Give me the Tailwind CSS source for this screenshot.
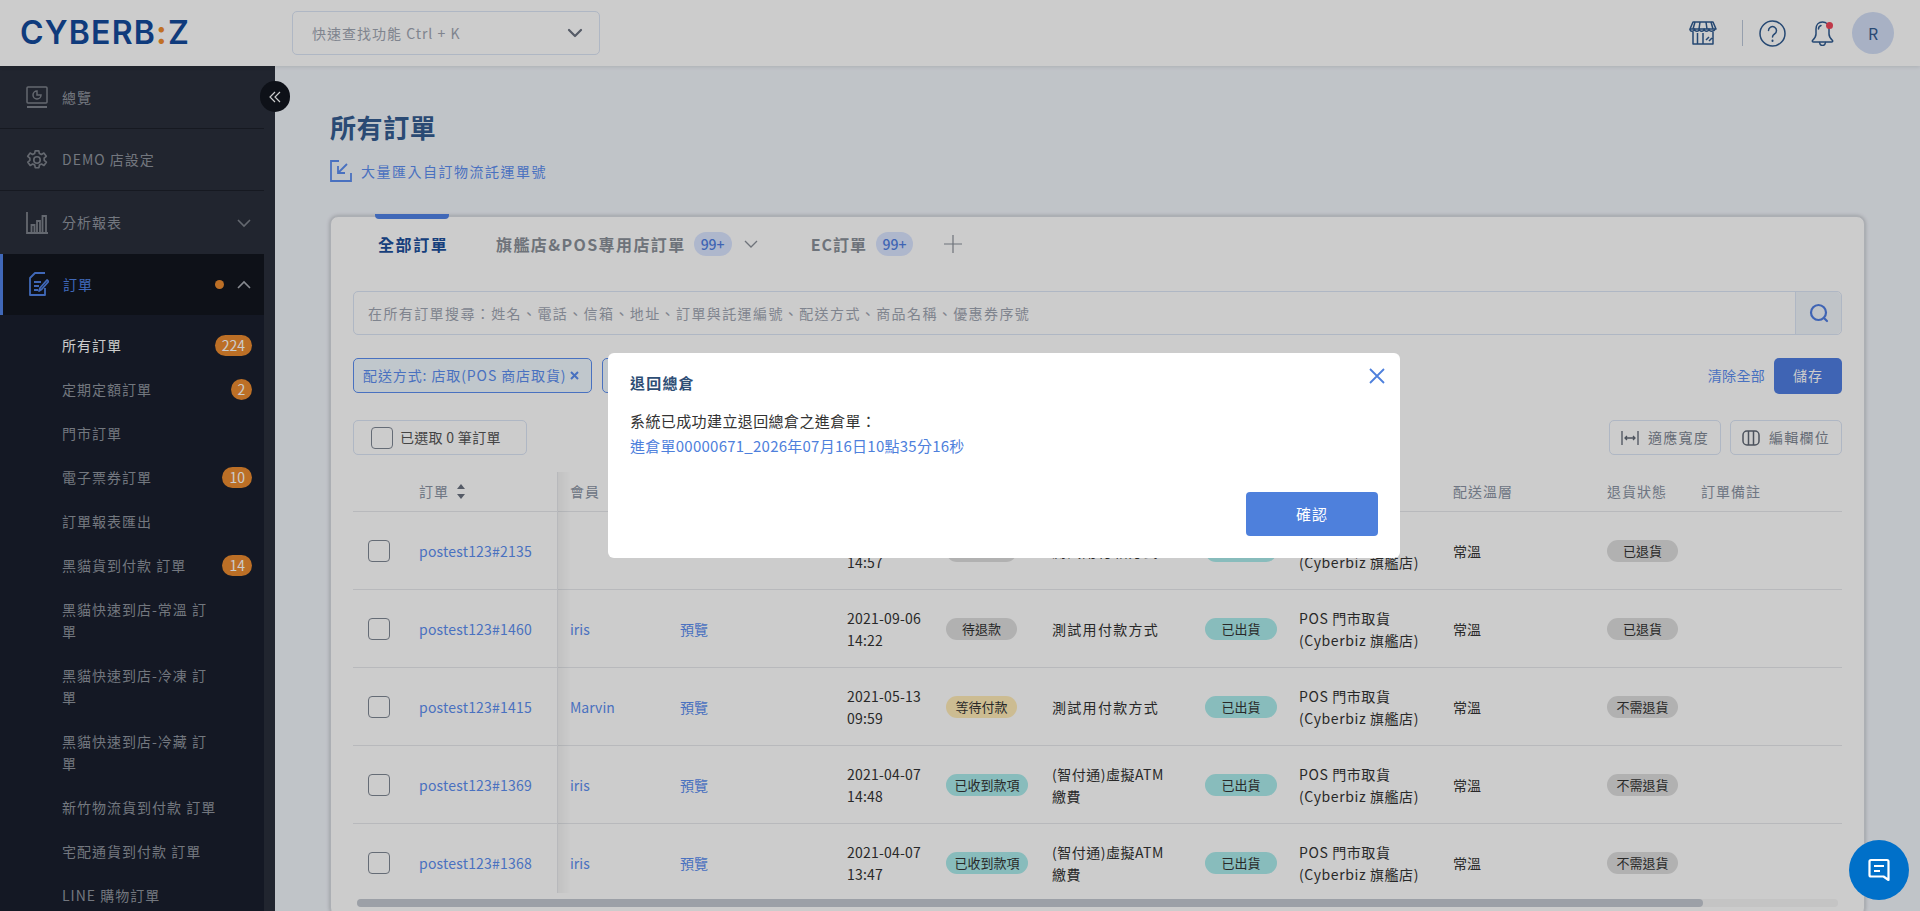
<!DOCTYPE html>
<html lang="zh-Hant">
<head>
<meta charset="utf-8">
<script src="https://cdn.jsdelivr.net/npm/@tailwindcss/browser@4"></script>
<title>所有訂單</title>
</head>
<body class="h-[911px] w-[1920px] overflow-hidden bg-[#f1f5fb] font-['Noto_Sans_CJK_TC','Noto_Sans',sans-serif] text-[14px] text-[#333]">
<header class="flex h-[66px] items-center bg-white shadow-[0_1px_4px_rgba(0,0,0,0.1)] relative z-10">
  <div class="ml-[20px] flex w-[272px] items-center font-['Inter',sans-serif] text-[32px] leading-none font-semibold tracking-[1.2px] text-[#134a9c]">CYBERB<span class="text-[#f08c2e] font-bold">:</span>Z</div>
  <div class="flex h-[44px] w-[308px] items-center justify-between rounded-[5px] border border-[#dbe5f5] pl-[19px] pr-[16px] text-[#9fa6b2] tracking-[1px]">
    <span>快速查找功能 Ctrl + K</span>
    <svg class="h-[14px] w-[16px]" viewBox="0 0 16 14" fill="none" stroke="#6b7280" stroke-width="2.2" stroke-linecap="round" stroke-linejoin="round"><path d="M2 4l6 6 6-6"/></svg>
  </div>
  <div class="ml-auto flex items-center">
    <svg class="h-[24px] w-[28px]" viewBox="0 0 28 24" fill="none" stroke="#2f5a8f" stroke-width="1.5" stroke-linejoin="round"><path d="M4 1h20l3 7H1z"/><path d="M6 1L4 8M11 1l-1 7M17 1l1 7M22 1l2 7"/><path d="M1 8c0 3 4 3 4.500 0 .5 3 4.300 3 4.800 0 .5 3 4.300 3 4.800 0 .5 3 4.300 3 4.800 0 .5 3 5.100 3 6.100 0" /><path d="M4 11v12h20V11M8.500 12v11M14 12v11M17 19l3-3M20 20l3-3"/></svg>
    <div class="ml-[25px] mr-[16px] h-[26px] w-px bg-[#bcc7d9]"></div>
    <svg class="h-[27px] w-[27px]" viewBox="0 0 27 27" fill="none" stroke="#2f5a8f" stroke-width="1.500" stroke-linecap="round"><circle cx="13.500" cy="13.500" r="12.500"/><path d="M9.500 10.500a4 4 0 1 1 6 3.500c-1.300.8-2 1.500-2 3"/><path d="M13.500 20.500v.5" stroke-width="2"/></svg>
    <div class="relative ml-[25px] h-[26px] w-[23px]">
      <svg class="h-[26px] w-[23px]" viewBox="0 0 23 26" fill="none" stroke="#2f5a8f" stroke-width="1.500" stroke-linecap="round" stroke-linejoin="round"><path d="M11.500 2c-4 0-6.500 3-6.500 7v5c0 3-2 5-3.500 6.500-.5.8 0 1.500 1 1.500h18c1 0 1.500-.7 1-1.500-1.500-1.500-3.500-3.500-3.500-6.500V9c0-4-2.500-7-6.500-7z"/><path d="M8.500 22.500c.3 2 1.500 3 3 3s2.700-1 3-3M7.500 9c0-2 1-3 2.500-3.500"/></svg>
      <span class="absolute right-[1px] top-[2px] h-[7px] w-[7px] rounded-full bg-[#f0465a]"></span>
    </div>
    <div class="ml-[18px] mr-[26px] flex h-[42px] w-[42px] items-center justify-center rounded-full bg-[#d2deF6] text-[16px] text-[#355d92]">R</div>
  </div>
</header>
<div class="flex h-[845px]">
  <aside class="relative w-[275px] shrink-0 bg-[#2a2f3b]">
    <div class="h-full w-[264px] overflow-hidden text-[#90959f] tracking-[1px]">
      <div class="flex h-[63px] items-center border-b border-[#1c202a] pl-[26px]">
        <svg class="mr-[14px] h-[22px] w-[22px]" viewBox="0 0 22 22" fill="none" stroke="#7e838c" stroke-width="1.500"><rect x="1" y="1" width="20" height="16" rx="1"/><path d="M1 21h20" stroke-width="2"/><path d="M11 5a4 4 0 1 0 4 4h-4z"/></svg>
        <span>總覽</span>
      </div>
      <div class="flex h-[62px] items-center border-b border-[#1c202a] pl-[26px]">
        <svg class="mr-[14px] h-[22px] w-[22px]" viewBox="0 0 24 24" fill="none" stroke="#7e838c" stroke-width="1.800" stroke-linejoin="round"><path d="M10 2h4l.6 3 2.200 1 2.700-1.600 2.600 3.600-2.300 2 .1 2.400 2.300 2-2.600 3.600-2.700-1.600-2.200 1-.6 3h-4l-.6-3-2.200-1-2.700 1.600-2.600-3.600 2.300-2-.1-2.400-2.300-2 2.600-3.600 2.700 1.600 2.200-1z"/><circle cx="12" cy="12" r="3.500"/></svg>
        <span>DEMO 店設定</span>
      </div>
      <div class="flex h-[63px] items-center pl-[26px] pr-[13px]">
        <svg class="mr-[14px] h-[22px] w-[22px]" viewBox="0 0 22 22" fill="none" stroke="#7e838c" stroke-width="1.800"><path d="M1 0v21h21"/><path d="M5.500 21v-8h3v8M11 21V9h3v12M16.500 21V4h3.500v17"/></svg>
        <span>分析報表</span>
        <svg class="ml-auto h-[10px] w-[14px]" viewBox="0 0 14 10" fill="none" stroke="#7e838c" stroke-width="1.600"><path d="M1 2l6 6 6-6"/></svg>
      </div>
      <div class="flex h-[61px] items-center border-l-[3px] border-[#5083e6] bg-[#12161f] pl-[26px] pr-[13px] text-[#5083e6]">
        <svg class="mr-[14px] h-[25px] w-[20px]" viewBox="0 0 20 25" fill="none" stroke="#5083e6" stroke-width="1.800" stroke-linejoin="round"><path d="M16 1H6L1 6v17h15V16"/><path d="M5 10h7M5 14h5M5 18h4"/><path d="M10 19l1-3 7-8 1.500 1.500-7 8z"/></svg>
        <span>訂單</span>
        <span class="ml-auto mr-[13px] h-[9px] w-[9px] rounded-full bg-[#ec8b30]"></span>
        <svg class="h-[10px] w-[14px]" viewBox="0 0 14 10" fill="none" stroke="#a9adb5" stroke-width="1.600"><path d="M1 8l6-6 6 6"/></svg>
      </div>
      <div class="h-[620px] bg-[#191f2d] pl-[62px] pr-[12px] pt-[8px] leading-[22px]">
        <div class="flex h-[44px] items-center justify-between text-white"><span>所有訂單</span><span class="rounded-full bg-[#ec8b30] px-[7px] tracking-normal text-[14px] leading-[21px]">224</span></div>
        <div class="flex h-[44px] items-center justify-between"><span>定期定額訂單</span><span class="flex h-[21px] w-[21px] items-center justify-center rounded-full bg-[#ec8b30] tracking-normal text-white">2</span></div>
        <div class="flex h-[44px] items-center">門市訂單</div>
        <div class="flex h-[44px] items-center justify-between"><span>電子票券訂單</span><span class="rounded-full bg-[#ec8b30] px-[7px] tracking-normal leading-[21px] text-white">10</span></div>
        <div class="flex h-[44px] items-center">訂單報表匯出</div>
        <div class="flex h-[44px] items-center justify-between"><span>黑貓貨到付款 訂單</span><span class="rounded-full bg-[#ec8b30] px-[7px] tracking-normal leading-[21px] text-white">14</span></div>
        <div class="w-[158px] py-[11px]">黑貓快速到店-常溫 訂單</div>
        <div class="w-[158px] py-[11px]">黑貓快速到店-冷凍 訂單</div>
        <div class="w-[158px] py-[11px]">黑貓快速到店-冷藏 訂單</div>
        <div class="flex h-[44px] items-center">新竹物流貨到付款 訂單</div>
        <div class="flex h-[44px] items-center">宅配通貨到付款 訂單</div>
        <div class="flex h-[44px] items-center">LINE 購物訂單</div>
      </div>
    </div>
    <button class="absolute left-[260px] top-[15px] flex h-[31px] w-[30px] items-center justify-center rounded-full bg-[#12161f]">
      <svg class="h-[12px] w-[12px]" viewBox="0 0 12 12" fill="none" stroke="#fff" stroke-width="1.200"><path d="M6 1L1 6l5 5M11 1L6 6l5 5"/></svg>
    </button>
  </aside>
  <main class="min-w-0 flex-1 pl-[55px] pr-[55px]">
    <h1 class="mt-[43px] text-[26px] leading-[36px] font-semibold tracking-[0.6px] text-[#355d92]">所有訂單</h1>
    <div class="mt-[15px] flex h-[22px] items-center tracking-[1.5px] text-[#5c8ef0]">
      <svg class="mr-[9px] h-[22px] w-[22px]" viewBox="0 0 22 22" fill="none" stroke="#5c8ef0" stroke-width="1.800"><path d="M9 1H1v20h20v-8"/><path d="M17 4l-9 9M8 6v7h7" /></svg>
      <span>大量匯入自訂物流託運單號</span>
    </div>
    <section class="relative mt-[34px] h-[700px] rounded-[8px] border border-[#d7dbe2] bg-white px-[22px] shadow-[0_0_4px_rgba(0,0,0,0.25)]">
      <div class="flex h-[74px] items-center pb-[26px] pt-[6px] text-[16px] font-semibold text-[#8a9099]">
        <div class="relative ml-[25px] w-[118px] text-[#1c4f9c] tracking-[1.6px]">全部訂單<span class="absolute -top-[18px] -left-[3px] h-[5px] w-[74px] rounded-b-[4px] bg-[#5083e6]"></span></div>
        <span class="tracking-[1.4px]">旗艦店&amp;POS專用店訂單</span>
        <span class="ml-[8px] flex h-[24px] w-[38px] items-center justify-center rounded-full bg-[#dae5ff] text-[14px] font-medium text-[#4f7ee2]">99+</span>
        <svg class="ml-[12px] h-[10px] w-[14px]" viewBox="0 0 14 10" fill="none" stroke="#8a9099" stroke-width="1.300"><path d="M1 2l6 6 6-6"/></svg>
        <span class="ml-[53px] tracking-[1px]">EC訂單</span>
        <span class="ml-[9px] flex h-[24px] w-[37px] items-center justify-center rounded-full bg-[#dae5ff] text-[14px] font-medium text-[#4f7ee2]">99+</span>
        <svg class="ml-[31px] h-[18px] w-[18px]" viewBox="0 0 18 18" fill="none" stroke="#8a9099" stroke-width="1.200"><path d="M9 0v18M0 9h18"/></svg>
      </div>
      <div class="flex h-[44px] rounded-[5px] border border-[#dbe5f5]">
        <div class="flex flex-1 items-center pl-[14px] tracking-[1.4px] text-[#9fa6b2]">在所有訂單搜尋：姓名、電話、信箱、地址、訂單與託運編號、配送方式、商品名稱、優惠券序號</div>
        <div class="flex w-[46px] items-center justify-center rounded-r-[5px] border-l border-[#dbe5f5] bg-[#f1f5fb]">
          <svg class="h-[20px] w-[20px]" viewBox="0 0 20 20" fill="none" stroke="#4f7ee2" stroke-width="2.200" stroke-linecap="round"><circle cx="9.500" cy="9.500" r="7.500"/><path d="M15 15l3 3"/></svg>
        </div>
      </div>
      <div class="mt-[23px] flex h-[35px] items-center">
        <div class="flex h-[35px] w-[239px] items-center rounded-[5px] border border-[#5c8ef0] bg-[#f1f9ff] pl-[9px] text-[#5c8ef0] tracking-[0.9px]">配送方式: 店取(POS 商店取貨)<svg class="ml-[4px] h-[9px] w-[9px]" viewBox="0 0 9 9" stroke="#5c8ef0" stroke-width="2"><path d="M1 1l7 7M8 1L1 8"/></svg></div>
        <div class="ml-[10px] h-[35px] w-[60px] rounded-[5px] border border-[#5c8ef0] bg-[#f1f9ff]"></div>
        <span class="ml-auto mr-[9px] tracking-[0.3px] text-[#5c8ef0]">清除全部</span>
        <span class="flex h-[36px] w-[68px] items-center justify-center rounded-[5px] bg-[#4f7ee2] text-white tracking-[1px]">儲存</span>
      </div>
      <div class="mt-[27px] flex h-[35px] items-center">
        <div class="flex h-[35px] w-[174px] items-center rounded-[5px] border border-[#dbe5f5] pl-[17px] tracking-[0.3px] text-[#555]">
          <span class="mr-[7px] h-[22px] w-[22px] rounded-[4px] border border-[#7f8794] bg-white"></span>已選取 0 筆訂單
        </div>
        <div class="ml-auto flex h-[35px] w-[112px] items-center justify-center rounded-[5px] border border-[#dbe5f5] tracking-[1.2px] text-[#808794]">
          <svg class="mr-[9px] h-[16px] w-[18px]" viewBox="0 0 18 16" fill="none" stroke="#606875" stroke-width="1.300"><path d="M1 1v14M17 1v14M4 8h10M6 6L4 8l2 2M12 6l2 2-2 2"/></svg>適應寬度
        </div>
        <div class="ml-[9px] flex h-[35px] w-[112px] items-center justify-center rounded-[5px] border border-[#dbe5f5] tracking-[1.2px] text-[#808794]">
          <svg class="mr-[9px] h-[16px] w-[18px]" viewBox="0 0 18 16" fill="none" stroke="#606875" stroke-width="1.500"><rect x="1" y="1" width="16" height="14" rx="4"/><path d="M6.500 1v14M11.500 1v14"/></svg>編輯欄位
        </div>
      </div>
      <div class="relative h-[438px] w-[1489px] overflow-hidden leading-[22px] text-[#333]">
        <span class="absolute bottom-0 left-[204px] top-[17px] w-[14px] border-l border-[#e6e8ec] bg-gradient-to-r from-black/5 to-transparent"></span>
        <div class="grid h-[57px] grid-cols-[66px_151px_110px_167px_99px_106px_153px_94px_154px_154px_94px_141px] items-center border-b border-[#e6e8ec] pt-[16px] tracking-[1px] text-[#8a93a3]">
          <span></span>
          <span class="flex items-center">訂單<svg class="ml-[8px] h-[15px] w-[8px]" viewBox="0 0 8 15" fill="#6b7280"><path d="M4 0l4 5H0zM0 10h8l-4 5z"/></svg></span>
          <span>會員</span><span></span><span></span><span></span><span></span><span></span><span></span>
          <span>配送溫層</span><span>退貨狀態</span><span>訂單備註</span>
        </div>

        <div class="grid h-[78px] grid-cols-[66px_151px_110px_167px_99px_106px_153px_94px_154px_154px_94px_141px] items-center border-b border-[#e6e8ec]">
          <span class="ml-[15px] h-[22px] w-[22px] rounded-[4px] border border-[#7f8794] bg-white"></span>
          <span class="tracking-[0.2px] text-[#5c8ef0]">postest123#2135</span><span></span><span></span>
          <span class="tracking-[0.2px]">2021-10-21<br>14:57</span>
          <span class="w-[71px] rounded-full bg-[#dedede] text-center text-[13px]">待退款</span>
          <span class="tracking-[1.300px]">測試用付款方式</span>
          <span class="w-[72px] rounded-full bg-[#aaebeb] text-center text-[13px]">已出貨</span>
          <span class="tracking-[0.6px]">POS 門市取貨<br>(Cyberbiz 旗艦店)</span>
          <span>常溫</span>
          <span class="w-[71px] rounded-full bg-[#dedede] text-center text-[13px]">已退貨</span><span></span>
        </div>
        <div class="grid h-[78px] grid-cols-[66px_151px_110px_167px_99px_106px_153px_94px_154px_154px_94px_141px] items-center border-b border-[#e6e8ec]">
          <span class="ml-[15px] h-[22px] w-[22px] rounded-[4px] border border-[#7f8794] bg-white"></span>
          <span class="tracking-[0.2px] text-[#5c8ef0]">postest123#1460</span><span class="text-[#5c8ef0]">iris</span><span class="text-[#5c8ef0]">預覽</span>
          <span class="tracking-[0.2px]">2021-09-06<br>14:22</span>
          <span class="w-[71px] rounded-full bg-[#dedede] text-center text-[13px]">待退款</span>
          <span class="tracking-[1.300px]">測試用付款方式</span>
          <span class="w-[72px] rounded-full bg-[#aaebeb] text-center text-[13px]">已出貨</span>
          <span class="tracking-[0.6px]">POS 門市取貨<br>(Cyberbiz 旗艦店)</span>
          <span>常溫</span>
          <span class="w-[71px] rounded-full bg-[#dedede] text-center text-[13px]">已退貨</span><span></span>
        </div>
        <div class="grid h-[78px] grid-cols-[66px_151px_110px_167px_99px_106px_153px_94px_154px_154px_94px_141px] items-center border-b border-[#e6e8ec]">
          <span class="ml-[15px] h-[22px] w-[22px] rounded-[4px] border border-[#7f8794] bg-white"></span>
          <span class="tracking-[0.2px] text-[#5c8ef0]">postest123#1415</span><span class="text-[#5c8ef0]">Marvin</span><span class="text-[#5c8ef0]">預覽</span>
          <span class="tracking-[0.2px]">2021-05-13<br>09:59</span>
          <span class="w-[71px] rounded-full bg-[#ffecb7] text-center text-[13px]">等待付款</span>
          <span class="tracking-[1.300px]">測試用付款方式</span>
          <span class="w-[72px] rounded-full bg-[#aaebeb] text-center text-[13px]">已出貨</span>
          <span class="tracking-[0.6px]">POS 門市取貨<br>(Cyberbiz 旗艦店)</span>
          <span>常溫</span>
          <span class="w-[71px] rounded-full bg-[#dedede] text-center text-[13px]">不需退貨</span><span></span>
        </div>
        <div class="grid h-[78px] grid-cols-[66px_151px_110px_167px_99px_106px_153px_94px_154px_154px_94px_141px] items-center border-b border-[#e6e8ec]">
          <span class="ml-[15px] h-[22px] w-[22px] rounded-[4px] border border-[#7f8794] bg-white"></span>
          <span class="tracking-[0.2px] text-[#5c8ef0]">postest123#1369</span><span class="text-[#5c8ef0]">iris</span><span class="text-[#5c8ef0]">預覽</span>
          <span class="tracking-[0.2px]">2021-04-07<br>14:48</span>
          <span class="w-[82px] rounded-full bg-[#aaebeb] text-center text-[13px]">已收到款項</span>
          <span class="tracking-[0.5px]">(智付通)虛擬ATM<br>繳費</span>
          <span class="w-[72px] rounded-full bg-[#aaebeb] text-center text-[13px]">已出貨</span>
          <span class="tracking-[0.6px]">POS 門市取貨<br>(Cyberbiz 旗艦店)</span>
          <span>常溫</span>
          <span class="w-[71px] rounded-full bg-[#dedede] text-center text-[13px]">不需退貨</span><span></span>
        </div>
        <div class="grid h-[78px] grid-cols-[66px_151px_110px_167px_99px_106px_153px_94px_154px_154px_94px_141px] items-center">
          <span class="ml-[15px] h-[22px] w-[22px] rounded-[4px] border border-[#7f8794] bg-white"></span>
          <span class="tracking-[0.2px] text-[#5c8ef0]">postest123#1368</span><span class="text-[#5c8ef0]">iris</span><span class="text-[#5c8ef0]">預覽</span>
          <span class="tracking-[0.2px]">2021-04-07<br>13:47</span>
          <span class="w-[82px] rounded-full bg-[#aaebeb] text-center text-[13px]">已收到款項</span>
          <span class="tracking-[0.5px]">(智付通)虛擬ATM<br>繳費</span>
          <span class="w-[72px] rounded-full bg-[#aaebeb] text-center text-[13px]">已出貨</span>
          <span class="tracking-[0.6px]">POS 門市取貨<br>(Cyberbiz 旗艦店)</span>
          <span>常溫</span>
          <span class="w-[71px] rounded-full bg-[#dedede] text-center text-[13px]">不需退貨</span><span></span>
        </div>
      </div>
      <div class="mt-[6px] ml-[4px] h-[8px] w-[1481px] rounded-full bg-[#f5f5f5]">
        <div class="h-full w-[1346px] rounded-full bg-[#c3c8d1]"></div>
      </div>
    </section>
  </main>
</div>

<div class="fixed inset-0 z-40 bg-black/20">
  <div class="absolute left-[608px] top-[353px] h-[205px] w-[792px] rounded-[6px] bg-white px-[22px] pt-[19px]">
    <div class="flex items-center justify-between">
      <h2 class="text-[15px] leading-[22px] font-semibold tracking-[1.2px] text-[#2e4e75]">退回總倉</h2>
      <svg class="-mr-[7px] -mt-[14px] h-[16px] w-[16px]" viewBox="0 0 16 16" fill="none" stroke="#4e80dc" stroke-width="1.800"><path d="M1 1l14 14M15 1L1 15"/></svg>
    </div>
    <p class="mt-[16px] text-[15px] leading-[22px] tracking-[0.4px] text-[#333]">系統已成功建立退回總倉之進倉單：</p>
    <p class="mt-[3px] text-[15px] leading-[22px] tracking-[0.25px] text-[#4e80dc]">進倉單00000671_2026年07月16日10點35分16秒</p>
    <div class="mt-[35px] flex justify-end">
      <button class="h-[44px] w-[132px] rounded-[4px] bg-[#4e80dc] text-[15px] tracking-[1px] text-white">確認</button>
    </div>
  </div>
  <div class="absolute left-[1849px] top-[840px] flex h-[60px] w-[60px] items-center justify-center rounded-full bg-[#0070c9]">
    <svg class="h-[24px] w-[24px]" viewBox="0 0 24 24" fill="none" stroke="#fff" stroke-width="2.200" stroke-linejoin="round"><path d="M4 2h16a1.500 1.500 0 0 1 1.500 1.500V22l-5-3.500H4A1.500 1.500 0 0 1 2.500 17V3.500A1.500 1.500 0 0 1 4 2z"/><path d="M7 8h10M7 13h6"/></svg>
  </div>
</div>
</body>
</html>
